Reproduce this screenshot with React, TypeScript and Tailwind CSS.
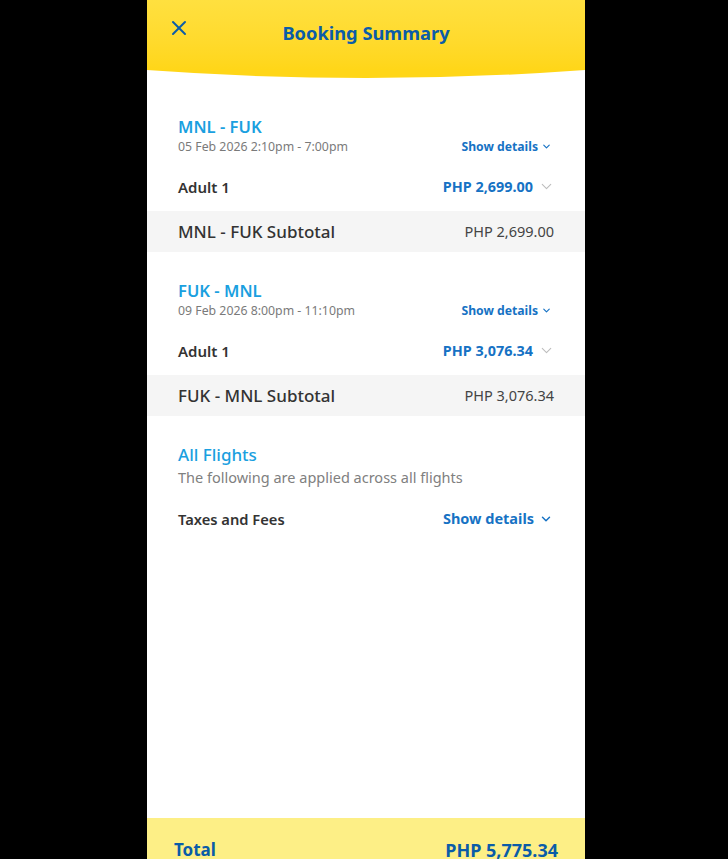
import { X, ChevronDown } from 'lucide-react';

type Leg = {
  route: string;
  date: string;
  price: string;
};

const legs: Leg[] = [
  { route: 'MNL - FUK', date: '05 Feb 2026 2:10pm - 7:00pm', price: 'PHP 2,699.00' },
  { route: 'FUK - MNL', date: '09 Feb 2026 8:00pm - 11:10pm', price: 'PHP 3,076.34' },
];

export default function App() {
  return (
    <div className="min-h-screen bg-black" style={{ fontFamily: '"Noto Sans", "Open Sans", sans-serif' }}>
      <div className="ml-[147px] w-[438px] h-[859px] bg-white flex flex-col overflow-hidden">
        <header className="relative">
          <div className="h-[70px] bg-gradient-to-b from-[#ffe03f] to-[#ffd618] flex items-center relative">
            <button className="absolute left-[20px] top-[16px] text-[#0b5ca8]">
              <X size={24} strokeWidth={2} />
            </button>
            <h1 className="w-full text-center text-[18.3px] font-bold text-[#0b5ca8] -mt-[4px]">Booking Summary</h1>
          </div>
          <svg className="block w-full h-[9px]" viewBox="0 0 438 9" preserveAspectRatio="none">
            <path d="M0 0 H438 V0 Q219 16 0 0 Z" fill="#ffd618" />
          </svg>
        </header>

        <main className="flex-1 pt-[36px]">
          {legs.map((leg) => (
            <section key={leg.route} className="mb-[27px]">
              <div className="px-[31px]">
                <div className="flex items-end justify-between">
                  <div>
                    <h2 className="text-[16.6px] font-semibold text-[#1aa0e0] leading-[24px]">{leg.route}</h2>
                    <p className="text-[12.3px] text-[#7a7a7a] leading-[15px]">{leg.date}</p>
                  </div>
                  <button className="flex items-center gap-[3px] text-[12.2px] font-bold text-[#1672c4] leading-[15px] pr-[2px]">
                    Show details
                    <ChevronDown size={11} strokeWidth={2.5} />
                  </button>
                </div>
                <div className="flex items-center justify-between h-[40px] mt-[13px]">
                  <span className="text-[15px] font-semibold text-[#333]">Adult 1</span>
                  <span className="flex items-center gap-[5px] text-[14.4px] font-bold text-[#1672c4]">
                    {leg.price}
                    <ChevronDown size={17} strokeWidth={1.5} className="text-[#bdbdbd] -mr-[1px]" />
                  </span>
                </div>
              </div>
              <div className="h-[41px] mt-[4px] bg-[#f5f5f5] px-[31px] flex items-center justify-between">
                <span className="text-[17px] font-medium text-[#333]">{leg.route} Subtotal</span>
                <span className="text-[14.5px] text-[#444]">{leg.price}</span>
              </div>
            </section>
          ))}

          <section className="px-[31px]">
            <h2 className="text-[17px] font-medium text-[#1aa0e0] leading-[24px]">All Flights</h2>
            <p className="text-[14.5px] text-[#808080] leading-[20px]">The following are applied across all flights</p>
            <div className="flex items-center justify-between h-[24px] mt-[20px]">
              <span className="text-[14.7px] font-semibold text-[#333]">Taxes and Fees</span>
              <button className="flex items-center gap-[5px] text-[14.5px] font-bold text-[#1672c4] pr-[1px]">
                Show details
                <ChevronDown size={14} strokeWidth={2.5} />
              </button>
            </div>
          </section>
        </main>

        <footer className="h-[41px] bg-[#fdef86] px-[27px] pt-[21px] flex items-start justify-between">
          <span className="text-[17px] font-bold text-[#0b5ca8] leading-[22px]">Total</span>
          <span className="text-[18px] font-bold text-[#0b5ca8] leading-[22px]">PHP 5,775.34</span>
        </footer>
      </div>
    </div>
  );
}
